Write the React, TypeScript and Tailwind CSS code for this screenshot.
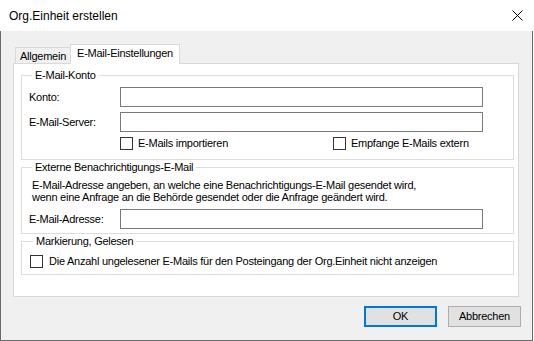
import React from 'react';

// kleines Kästchen wie bei WinForms
function CheckBox({ label, className = '' }: { label: string; className?: string }) {
    return (
        <div className={`flex items-center ${className}`}>
            <div className="h-[13px] w-[13px] border border-[#333333] bg-white"></div>
            <span className="ml-[5px]">{label}</span>
        </div>
    );
}

function TextInput() {
    return <div className="h-[20px] w-[363px] border border-[#7a7a7a] bg-white"></div>;
}

function Row({ label }: { label: string }) {
    return (
        <div className="flex items-center">
            <span className="w-[91px]">{label}</span>
            <TextInput />
        </div>
    );
}

export default function App() {
    return (
        <div className="h-[341px] w-[534px] bg-white font-['Liberation_Sans',Arial,sans-serif] text-[11px] leading-[13px] tracking-[-0.25px] text-black">
            <div className="flex h-[341px] w-[533px] flex-col">
                {/* Titelleiste */}
                <div className="flex h-[31px] shrink-0 items-center justify-between bg-white pl-[9px] pr-[10px]">
                    <span className="text-[12px] leading-[16px] tracking-normal">Org.Einheit erstellen</span>
                    <svg width="11" height="11" viewBox="0 0 11 11" className="mb-px">
                        <path d="M0.5 0.5 L10.5 10.5 M10.5 0.5 L0.5 10.5" stroke="#000" strokeWidth="1" />
                    </svg>
                </div>

                <div className="flex flex-1 flex-col border-x border-b border-[#6b6b6b] bg-[#f0f0f0] pl-[12px] pr-[12px] pt-[13px]">
                    {/* Reiter */}
                    <div className="-mb-px flex h-[20px] items-end pl-[2px]">
                        <div className="flex h-[17px] w-[55px] items-center justify-center border-l border-t border-[#d9d9d9] bg-[#f0f0f0]">
                            Allgemein
                        </div>
                        <div className="relative z-10 flex h-[20px] w-[110px] items-center justify-center border-x border-t border-[#d9d9d9] bg-white pb-[2px]">
                            E-Mail-Einstellungen
                        </div>
                    </div>

                    <div className="flex h-[234px] w-[506px] flex-col border border-[#d9d9d9] bg-white pl-[7px] pt-[5px]">
                        <fieldset className="flex w-[493px] flex-col gap-[5px] border border-[#dcdcdc] pb-[9px] pl-[7px] pt-[5px]">
                            <legend className="ml-[3px] px-[3px]">E-Mail-Konto</legend>
                            <Row label="Konto:" />
                            <Row label="E-Mail-Server:" />
                            <div className="flex h-[13px] items-center pl-[91px]">
                                <CheckBox label="E-Mails importieren" className="w-[213px]" />
                                <CheckBox label="Empfange E-Mails extern" />
                            </div>
                        </fieldset>

                        <fieldset className="mt-px flex w-[493px] flex-col border border-[#dcdcdc] pb-[4px] pl-[7px] pt-[5px]">
                            <legend className="ml-[3px] px-[3px]">Externe Benachrichtigungs-E-Mail</legend>
                            <p className="pl-[3px] leading-[12px]">
                                E-Mail-Adresse angeben, an welche eine Benachrichtigungs-E-Mail gesendet wird,
                                <br />
                                wenn eine Anfrage an die Behörde gesendet oder die Anfrage geändert wird.
                            </p>
                            <div className="mt-[6px]">
                                <Row label="E-Mail-Adresse:" />
                            </div>
                        </fieldset>

                        <fieldset className="mt-px flex w-[493px] flex-col border border-[#dcdcdc] pb-[6px] pl-[8px] pt-[7px]">
                            <legend className="ml-[3px] px-[3px]">Markierung, Gelesen</legend>
                            <CheckBox label="Die Anzahl ungelesener E-Mails für den Posteingang der Org.Einheit nicht anzeigen" className="[&>span]:ml-[6px]" />
                        </fieldset>
                    </div>

                    {/* Schaltflächen */}
                    <div className="-mr-px mt-[9px] flex justify-end gap-[11px]">
                        <button className="h-[21px] w-[73px] border-2 border-[#0078d7] bg-[#e1e1e1] leading-[17px]">OK</button>
                        <button className="h-[21px] w-[73px] border border-[#adadad] bg-[#e1e1e1] leading-[19px]">Abbrechen</button>
                    </div>
                </div>
            </div>
        </div>
    );
}
